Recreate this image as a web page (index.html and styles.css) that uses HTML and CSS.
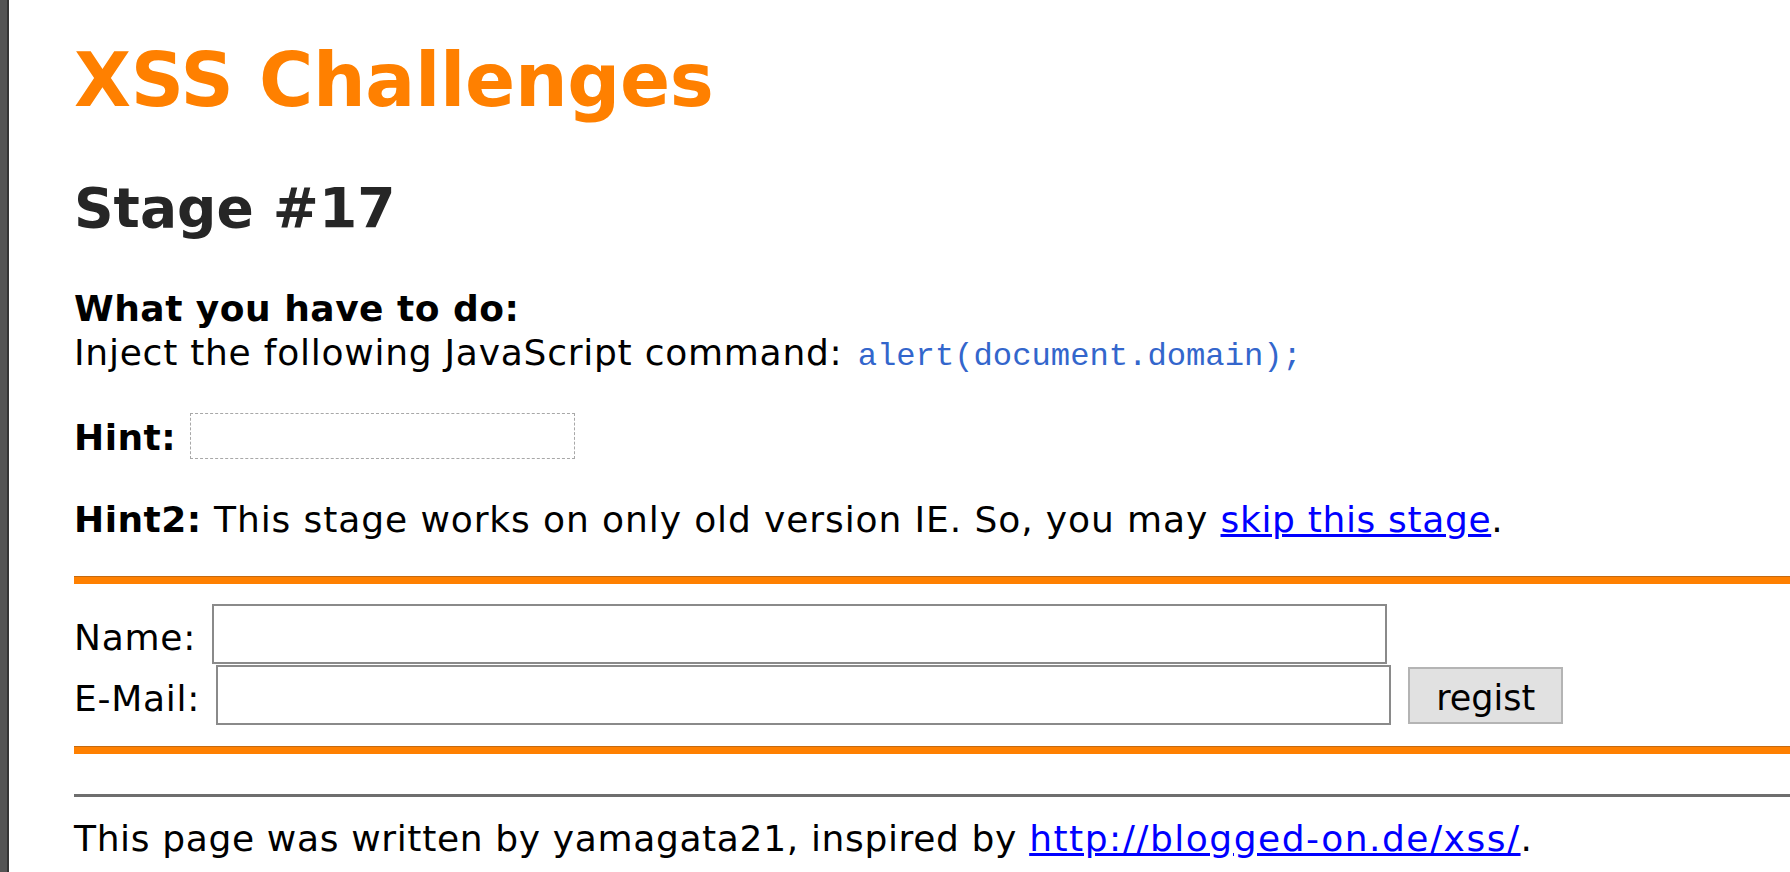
FILE: index.html
```html
<!DOCTYPE html>
<html lang="en">
<head>
<meta charset="utf-8">
<title>XSS Challenges - Stage #17</title>
<link rel="stylesheet" href="styles.css">
</head>
<body>
<div class="frame">
  <div class="edge"></div>
  <main class="content">
    <h1 class="title">XSS Challenges</h1>
    <h2 class="stage">Stage #17</h2>
    <div class="task">
      <div class="task-head">What you have to do:</div>
      <div class="task-body">Inject the following JavaScript command: <code class="cmd">alert(document.domain);</code></div>
    </div>
    <div class="hint"><b class="hint-label">Hint:</b><span class="hint-box"></span></div>
    <p class="hint2"><b class="strong">Hint2:</b> This stage works on only old version IE. So, you may <a class="link link-skip" href="#">skip this stage</a>.</p>
    <hr class="bar">
    <form class="form">
      <div class="row"><label class="row-label">Name:</label><input class="field" type="text"></div>
      <div class="row row-mail"><label class="row-label">E-Mail:</label><input class="field" type="text"><button class="btn" type="button">regist</button></div>
    </form>
    <hr class="bar bar-low">
    <hr class="rule">
    <p class="foot">This page was written by yamagata21, inspired by <a class="link link-url" href="#">http://blogged-on.de/xss/</a>.</p>
  </main>
</div>
</body>
</html>
```
FILE: styles.css
```css
html, body {
  margin: 0;
  padding: 0;
  background: #ffffff;
  overflow: hidden;
}

body {
  font-family: "DejaVu Sans", Verdana, sans-serif;
  font-size: 36px;
  line-height: 44px;
  color: #000;
  letter-spacing: 0.75px;
}

.frame {
  display: flex;
  height: 872px;
}

.edge {
  width: 7px;
  flex: none;
  background: #545454;
  border-right: 2px solid #343434;
}

.content {
  flex: 1;
  padding-left: 65px;
  min-width: 0;
}

.title {
  margin: 36px 0 0;
  font-size: 74px;
  line-height: 88px;
  font-weight: bold;
  letter-spacing: -0.3px;
  color: #ff8000;
}

.stage {
  margin: 52px 0 0;
  font-size: 55px;
  line-height: 64px;
  font-weight: bold;
  letter-spacing: 0;
  color: #262626;
}

.task {
  margin-top: 47px;
}

.task-head {
  font-weight: bold;
  letter-spacing: 0.5px;
}

.cmd {
  margin-left: 3px;
  font-family: "Liberation Mono", "DejaVu Sans Mono", monospace;
  font-size: 32.2px;
  line-height: 1;
  letter-spacing: 0;
  color: #3366cc;
}

.hint {
  display: flex;
  align-items: flex-start;
  margin-top: 38px;
}

.hint-label {
  margin-top: 3px;
  margin-right: 14px;
  letter-spacing: 0.5px;
}

.hint-box {
  display: block;
  width: 385px;
  height: 46px;
  box-sizing: border-box;
  border: 1px dashed #a8a8a8;
}

.hint2 {
  margin: 38px 0 0;
  letter-spacing: 0.9px;
}

.strong {
  letter-spacing: 0.5px;
}

.link {
  color: #0000ff;
  text-decoration: underline;
}

.link-skip {
  letter-spacing: 0.65px;
}

.bar {
  margin: 34px 0 0;
  height: 8px;
  border: 0;
  border-top: 1px solid #c46a10;
  background: #ff8000;
  box-sizing: border-box;
}

.bar-low {
  margin-top: 21px;
}

.form {
  margin: 20px 0 0;
}

.row {
  display: flex;
  align-items: flex-start;
  height: 60px;
}

.row-mail {
  margin-top: 1px;
}

.row-label {
  margin-top: 12px;
  margin-right: 16px;
}

.field {
  width: 1175px;
  height: 60px;
  box-sizing: border-box;
  margin: 0;
  padding: 0 4px;
  border: 2px solid #8a8a8a;
  background: #fff;
  font: inherit;
}

.btn {
  margin: 2px 0 0 17px;
  width: 155px;
  height: 57px;
  box-sizing: border-box;
  padding: 5px 0 0;
  border: 2px solid #b4b4b4;
  background: #e1e1e1;
  font-family: "DejaVu Sans", Verdana, sans-serif;
  font-size: 35px;
  line-height: 48px;
  color: #000;
}

.rule {
  margin: 40px 0 0;
  height: 3px;
  border: 0;
  background: #6e6e6e;
}

.foot {
  margin: 20px 0 0;
  letter-spacing: 0.65px;
}

.foot .link-url {
  letter-spacing: 1.5px;
}
```
